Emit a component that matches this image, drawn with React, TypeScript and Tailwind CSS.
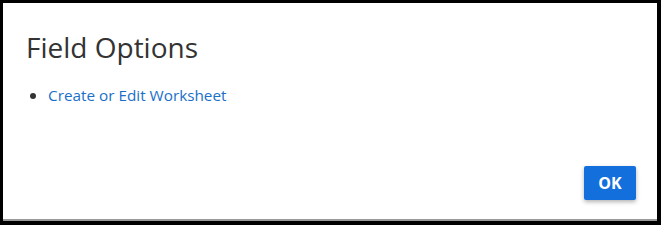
import React from "react";

export default function App() {
  return (
    <div className="w-[661px] h-[225px] bg-black pt-[3px] pl-[3px] pr-[4px] pb-[4px]">
      <div className="h-full bg-white border-b-2 border-[#9a9a9a] flex flex-col font-['Open_Sans',sans-serif]">
        <div className="flex-1 pl-[23px] pt-[26px]">
          <h2 className="text-[28px] leading-[36px] text-[#333333]">Field Options</h2>
          <ul className="mt-[18px] pl-[22px] list-disc marker:text-[#333333]">
            <li>
              <a href="#" className="text-[15.3px] leading-[22px] text-[#1a6fc9]">
                Create or Edit Worksheet
              </a>
            </li>
          </ul>
        </div>
        <div className="flex justify-end pr-[21px] pb-[19px]">
          <button className="w-[52px] h-[34px] rounded-[2px] bg-[#126fdc] text-white font-bold text-[16px] shadow-[0_2px_4px_rgba(0,0,0,0.3)]">
            OK
          </button>
        </div>
      </div>
    </div>
  );
}
